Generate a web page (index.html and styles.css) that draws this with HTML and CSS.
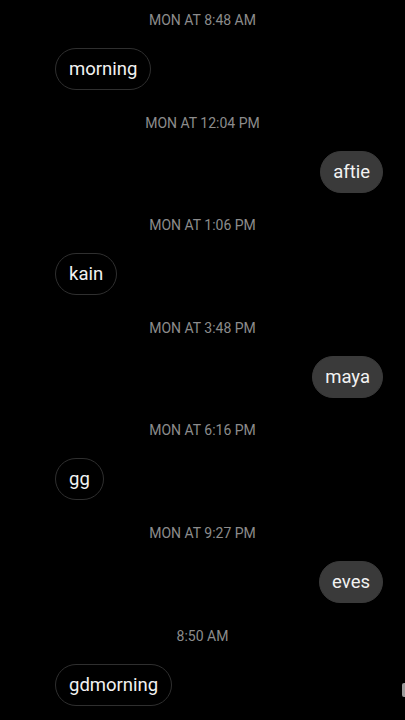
FILE: index.html
```html
<!DOCTYPE html>
<html lang="en">
<head>
    <meta charset="UTF-8">
    <meta name="viewport" content="width=device-width, initial-scale=1.0">
    <title>Messages</title>
    <link rel="stylesheet" href="styles.css">
</head>
<body>
    <div class="thread">
        <div class="stamp">MON AT 8:48 AM</div>
        <div class="row in"><div class="bubble">morning</div></div>

        <div class="stamp">MON AT 12:04 PM</div>
        <div class="row out"><div class="bubble">aftie</div></div>

        <div class="stamp">MON AT 1:06 PM</div>
        <div class="row in"><div class="bubble">kain</div></div>

        <div class="stamp">MON AT 3:48 PM</div>
        <div class="row out"><div class="bubble">maya</div></div>

        <div class="stamp">MON AT 6:16 PM</div>
        <div class="row in"><div class="bubble">gg</div></div>

        <div class="stamp">MON AT 9:27 PM</div>
        <div class="row out"><div class="bubble">eves</div></div>

        <div class="stamp">8:50 AM</div>
        <div class="row in"><div class="bubble">gdmorning</div></div>
    </div>
    <div class="scroll-thumb"></div>
</body>
</html>
```

FILE: styles.css
```css
html, body {
    margin: 0;
    background-color: #000;
}
body {
    font-family: Roboto, "Noto Sans", Arial, sans-serif;
    width: 405px;
    height: 720px;
    overflow: hidden;
    position: relative;
}
.thread {
    display: flex;
    flex-direction: column;
    padding: 12px 22px 0 55px;
}
.stamp {
    text-align: center;
    color: #8c8c8c;
    font-size: 14px;
    line-height: 16px;
    height: 16px;
    margin-bottom: 20px;
    margin-left: -33px;
}
.row {
    display: flex;
    margin-bottom: 24.6px;
}
.row.in {
    justify-content: flex-start;
}
.row.out {
    justify-content: flex-end;
}
.bubble {
    color: #f2f2f2;
    font-size: 18.5px;
    line-height: 22px;
    padding: 9px 13px;
    border-radius: 21px;
    border: 1px solid #2f2f2f;
    background-color: #000;
}
.row.out .bubble {
    background-color: #3a3a3a;
    border-color: #3a3a3a;
    padding: 9px 12px;
}
.scroll-thumb {
    position: absolute;
    right: 0;
    top: 683px;
    width: 3px;
    height: 14px;
    border-radius: 2px 0 0 2px;
    background-color: #9a9a9a;
}
```
